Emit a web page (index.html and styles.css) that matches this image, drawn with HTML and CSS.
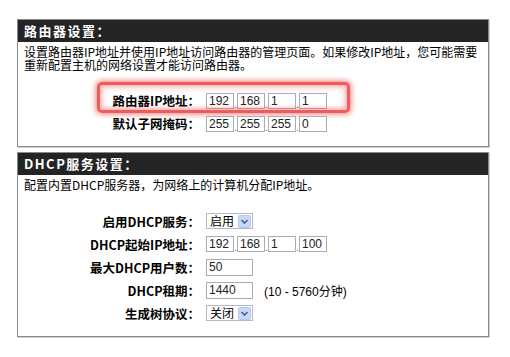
FILE: index.html
```html
<!DOCTYPE html>
<html lang="zh-CN">
<head>
    <meta charset="UTF-8">
    <title>路由器设置</title>
    <link rel="stylesheet" href="styles.css">
</head>
<body>

<div class="panel">
    <div class="panel-head">路由器设置：</div>
    <div class="panel-body">
        <p class="desc">设置路由器IP地址并使用IP地址访问路由器的管理页面。如果修改IP地址，您可能需要重新配置主机的网络设置才能访问路由器。</p>
        <div class="rows">
            <div class="row marked">
                <span class="glow"></span>
                <label>路由器IP地址：</label>
                <div class="ip">
                    <input type="text" value="192"><span class="dot">.</span><input type="text" value="168"><span class="dot">.</span><input type="text" value="1"><span class="dot">.</span><input type="text" value="1">
                </div>
            </div>
            <div class="row">
                <label>默认子网掩码：</label>
                <div class="ip">
                    <input type="text" value="255"><span class="dot">.</span><input type="text" value="255"><span class="dot">.</span><input type="text" value="255"><span class="dot">.</span><input type="text" value="0">
                </div>
            </div>
        </div>
    </div>
</div>

<div class="panel">
    <div class="panel-head">DHCP服务设置：</div>
    <div class="panel-body">
        <p class="desc">配置内置DHCP服务器，为网络上的计算机分配IP地址。</p>
        <div class="rows">
            <div class="row">
                <label>启用DHCP服务：</label>
                <div class="field">
                    <span class="select">启用<svg class="arrow" width="13" height="13" viewBox="0 0 13 13"><rect x="0.5" y="0.5" width="12" height="12" rx="1" fill="#c8d8f8" stroke="#b4c8f0"/><path d="M3.5 5l3 3 3-3" fill="none" stroke="#4d6185" stroke-width="1.6"/></svg></span>
                </div>
            </div>
            <div class="row">
                <label>DHCP起始IP地址：</label>
                <div class="ip">
                    <input type="text" value="192"><span class="dot">.</span><input type="text" value="168"><span class="dot">.</span><input type="text" value="1"><span class="dot">.</span><input type="text" value="100">
                </div>
            </div>
            <div class="row">
                <label>最大DHCP用户数：</label>
                <div class="field">
                    <input class="text" type="text" value="50">
                </div>
            </div>
            <div class="row">
                <label>DHCP租期：</label>
                <div class="field">
                    <input class="text" type="text" value="1440">
                    <span class="hint">(10 - 5760分钟)</span>
                </div>
            </div>
            <div class="row">
                <label>生成树协议：</label>
                <div class="field">
                    <span class="select">关闭<svg class="arrow" width="13" height="13" viewBox="0 0 13 13"><rect x="0.5" y="0.5" width="12" height="12" rx="1" fill="#c8d8f8" stroke="#b4c8f0"/><path d="M3.5 5l3 3 3-3" fill="none" stroke="#4d6185" stroke-width="1.6"/></svg></span>
                </div>
            </div>
        </div>
    </div>
</div>

</body>
</html>
```

FILE: styles.css
```css
/* Estilos basicos */
body {
    margin: 0;
    padding: 19px 0 0 17px;
    background: #fff;
    font-family: "Noto Sans CJK SC", "Liberation Sans", sans-serif;
    font-size: 12px;
    color: #000;
}
.panel {
    width: 472px;
    box-sizing: border-box;
    border: 1px solid #8a8a8a;
    box-shadow: 1px 1px 0 #d0d0d0;
    margin-bottom: 5px;
}
.panel-head {
    height: 22px;
    line-height: 22px;
    background-color: #242424;
    color: #fff;
    font-weight: bold;
    font-size: 13px;
    letter-spacing: 1.5px;
    padding-left: 6px;
}
.panel-body {
    padding: 4px 6px 11px;
}
.desc {
    margin: 0;
    line-height: 12.5px;
}
.rows {
    margin-top: 18px;
}
.row {
    position: relative;
    display: grid;
    grid-template-columns: 176px auto;
    column-gap: 6px;
    align-items: center;
    height: 23px;
}
.row label {
    text-align: right;
    font-weight: bold;
    font-size: 12.5px;
}
.glow {
    position: absolute;
    left: 73px;
    top: -7px;
    width: 253px;
    height: 31px;
    box-sizing: border-box;
    border: 3px solid #f25a5a;
    border-radius: 5px;
    box-shadow: 0 0 5px 2px rgba(240, 70, 70, 0.55), inset 0 0 5px 2px rgba(240, 70, 70, 0.45);
}
.ip, .field {
    display: flex;
    align-items: center;
}
input {
    font-family: "Liberation Sans", Arial, sans-serif;
    font-size: 12px;
    color: #222;
    border: 1px solid #a9adb3;
    padding: 0 2px;
    margin: 0;
    height: 16px;
    box-sizing: border-box;
    background: #fff;
}
.ip input {
    width: 28px;
}
.dot {
    width: 3px;
    font-family: "Liberation Sans", Arial, sans-serif;
    font-size: 10px;
    color: #666;
    text-align: center;
    align-self: flex-end;
    line-height: 9px;
}
.text {
    width: 47px;
    height: 17px;
}
.select {
    display: flex;
    align-items: center;
    gap: 4px;
    height: 16px;
    padding: 0 1px 0 3px;
    border: 1px solid #b5b9bf;
    box-sizing: border-box;
    white-space: nowrap;
    font-size: 12px;
    line-height: 14px;
}
.arrow {
    display: block;
    flex: none;
}
.hint {
    margin-left: 11px;
    font-family: "Liberation Sans", "Noto Sans CJK SC", sans-serif;
    font-size: 12px;
}
```
